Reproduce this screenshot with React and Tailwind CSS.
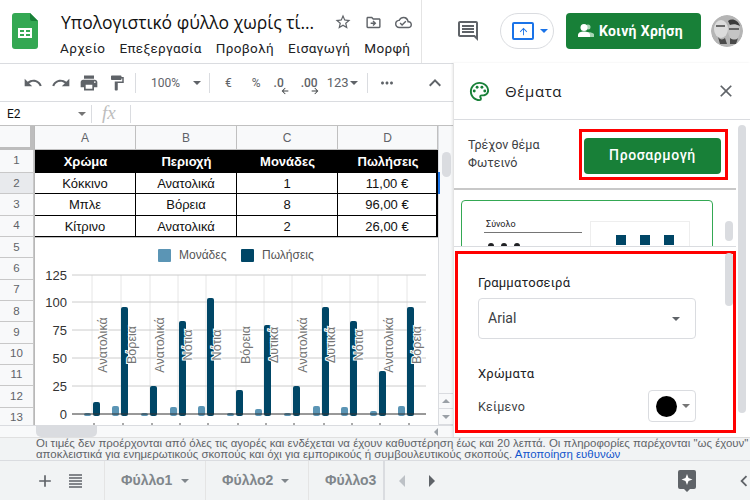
import React from 'react';
import {
  MdUndo, MdRedo, MdPrint, MdFormatPaint, MdMoreHoriz, MdKeyboardArrowUp, MdStarBorder,
  MdOutlineDriveFileMove, MdOutlineCloudDone, MdOutlineComment, MdOutlinePalette,
  MdClose, MdArrowUpward, MdAdd, MdArrowBack, MdArrowForward, MdChevronLeft,
} from 'react-icons/md';

const font = { roboto: 'font-["Roboto",sans-serif]' };

const rows = [
  ['Κόκκινο', 'Ανατολικά', '1', '11,00 €'],
  ['Μπλε', 'Βόρεια', '8', '96,00 €'],
  ['Κίτρινο', 'Ανατολικά', '2', '26,00 €'],
];

const bars = [
  [85, 413, 94, 402, 'Ανατολικά', 103],
  [113, 406, 122, 307, 'Βόρεια', 132],
  [142, 413, 151, 386, 'Ανατολικά', 160],
  [171, 407, 180, 321, 'Νότια', 188],
  [199, 406, 208, 298, 'Νότια', 217],
  [228, 413, 237, 390, 'Βόρεια', 246],
  [256, 409, 265, 325, 'Δυτικά', 274],
  [285, 413, 294, 386, 'Ανατολικά', 303],
  [314, 406, 323, 307, 'Δυτικά', 331],
  [342, 407, 351, 321, 'Νότια', 359],
  [371, 411, 380, 371, 'Ανατολικά', 389],
  [399, 406, 408, 307, 'Βόρεια', 417],
];

const ticks = [[125, 275], [100, 302], [75, 330], [50, 358], [25, 386], [0, 414]];
const vlines = [93, 122, 151, 179, 207, 237, 265, 293, 323, 351, 379, 408];

const Caret = ({ className = 'border-t-[#5f6368]' }) => (
  <span className={`inline-block w-0 h-0 border-x-[4px] border-x-transparent border-t-[4px] ${className}`} />
);

const Logo = () => (
  <svg width="26" height="36" viewBox="0 0 26 36">
    <path d="M3 0h15l8 8v25a3 3 0 0 1-3 3H3a3 3 0 0 1-3-3V3a3 3 0 0 1 3-3z" fill="#34a853" />
    <path d="M18 0l8 8h-6a2 2 0 0 1-2-2z" fill="#188038" />
    <path d="M6 15h14v10H6z" fill="#fff" />
    <path d="M8 17h4v2H8zM14 17h4v2h-4zM8 21h4v2H8zM14 21h4v2h-4z" fill="#34a853" />
  </svg>
);

const Avatar = () => (
  <svg width="32" height="32" viewBox="0 0 32 32" className="rounded-full">
    <circle cx="16" cy="16" r="16" fill="#b5b5b5" />
    <ellipse cx="10" cy="14" rx="7" ry="9" fill="#dcdcdc" />
    <ellipse cx="23" cy="16" rx="6" ry="9" fill="#c4c4c4" />
    <path d="M17 6c4-3 10-1 12 5-4-2-7-2-10-1z" fill="#3a3a3a" />
    <path d="M5 11h9M18 14h10" stroke="#444" strokeWidth="1.5" />
    <path d="M7 22c2 3 5 3 7 1l2 6H9zM19 23c3 2 6 2 8 0l-2 6h-6z" fill="#4a4a4a" />
  </svg>
);

const ShareIcon = () => (
  <svg width="16" height="14" viewBox="0 0 16 14" className="shrink-0">
    <circle cx="10" cy="3" r="2.5" fill="#a8d5b5" />
    <path d="M8 9c1-1 6-1 8 1v3H9z" fill="#a8d5b5" />
    <circle cx="6" cy="3.5" r="3.5" fill="#fff" />
    <path d="M0 13v-2c0-2.5 3-3.5 6-3.5s6 1 6 3.5v2z" fill="#fff" />
  </svg>
);

const Header = () => (
  <header className="relative h-16 shrink-0 flex items-start border-b border-[#dadce0] bg-white">
    <div className="pl-3 pt-[13px] w-[61px] shrink-0"><Logo /></div>
    <div className="pt-[8px] w-[361px] shrink-0 border-r border-[#e4e4e4] h-full">
      <div className="flex items-center h-[28px]">
        <span className="text-[17.5px] text-[#111] font-['Open_Sans',sans-serif] w-[274px] whitespace-nowrap">Υπολογιστικό φύλλο χωρίς τί...</span>
        <MdStarBorder className="text-[18px] text-[#5f6368] ml-[-1px]" />
        <MdOutlineDriveFileMove className="text-[17px] text-[#5f6368] ml-[13px]" />
        <MdOutlineCloudDone className="text-[17px] text-[#5f6368] ml-[13px]" />
      </div>
      <nav className={`flex gap-[14px] -ml-px text-[13.5px] text-[#202124] tracking-[0.35px] mt-[2px] whitespace-nowrap overflow-hidden ${font.roboto}`}>
        <span>Αρχείο</span><span>Επεξεργασία</span><span>Προβολή</span><span>Εισαγωγή</span><span>Μορφή</span>
      </nav>
    </div>
    <div className="flex items-center h-[36px] mt-[13px]">
      <MdOutlineComment className="text-[24px] text-[#5f6368] ml-[34px]" />
      <div className="ml-[20px] w-[54px] h-[36px] rounded-full border border-[#dadce0] flex items-center pl-[11px] gap-[3px]">
        <span className="w-[22px] h-[18px] border-2 border-[#1a73e8] rounded-[2px] flex items-center justify-center">
          <MdArrowUpward className="text-[11px] text-[#1a73e8]" />
        </span>
        <Caret className="border-t-[#1a73e8] ml-[3px]" />
      </div>
      <button className={`ml-[12px] w-[135px] h-[36px] rounded-[4px] bg-[#188038] text-white text-[14px] font-bold tracking-[0.35px] flex items-center pl-[12px] gap-[5px] whitespace-nowrap ${font.roboto}`}>
        <ShareIcon />Κοινή Χρήση
      </button>
      <div className="ml-[10px]"><Avatar /></div>
    </div>
  </header>
);

const Divider = () => <span className="block w-px h-[20px] bg-[#dadce0]" />;

const Toolbar = () => (
  <div className={`h-[38px] flex items-center text-[#5f6368] border-b border-[#dadce0] ${font.roboto}`}>
    <MdUndo className="text-[20px] ml-[23px]" />
    <MdRedo className="text-[20px] ml-[8px]" />
    <MdPrint className="text-[20px] ml-[8px]" />
    <MdFormatPaint className="text-[18px] ml-[9px]" />
    <span className="ml-[9px]"><Divider /></span>
    <span className="text-[12px] ml-[15px] w-[39px]">100%</span>
    <Caret className="border-t-[#5f6368] ml-[3px]" />
    <span className="ml-[8px]"><Divider /></span>
    <span className="text-[12px] ml-[15px]">€</span>
    <span className="text-[12px] ml-[20px]">%</span>
    <span className="text-[12px] font-medium ml-[13px] relative">.0<MdArrowBack className="absolute top-[12px] left-[6px] text-[10px] text-[#3c4043]" /></span>
    <span className="text-[12px] font-medium ml-[17px] relative">.00<MdArrowForward className="absolute top-[12px] left-[9px] text-[10px] text-[#3c4043]" /></span>
    <span className="text-[13px] ml-[9px]">123</span>
    <Caret className="border-t-[#5f6368] ml-[1px]" />
    <span className="ml-[9px]"><Divider /></span>
    <MdMoreHoriz className="text-[18px] ml-[10px]" />
    <MdKeyboardArrowUp className="text-[24px] ml-[27px]" />
  </div>
);

const FormulaBar = () => (
  <div className="h-[24px] flex items-center border-b border-[#c0c0c0] shrink-0">
    <span className={`text-[12px] text-[#111] pl-[7px] w-[78px] ${font.roboto}`}>E2</span>
    <Caret className="border-t-[#757575]" />
    <span className="ml-[5px] w-px h-[18px] bg-[#dadce0]" />
    <span className="ml-[10px] w-[28px] text-[19px] italic text-[#bdbdbd] font-['Liberation_Serif',serif]">fx</span>
    <span className="w-px h-[18px] bg-[#dadce0]" />
  </div>
);

const colHead = 'flex items-center justify-center border-r border-[#c0c0c0] text-[12px] text-[#5f6368] font-["Liberation_Sans",sans-serif]';

const Chart = () => (
  <div className="h-[188px] bg-white border-t border-[#c0c0c0] overflow-hidden">
    <svg width="403" height="188" viewBox="36 238 403 188" className="block font-['Liberation_Sans',sans-serif]">
      <rect x="159" y="249" width="13" height="13" rx="1" fill="#5b95b5" />
      <text x="180" y="259" fontSize="12" fill="#555">Μονάδες</text>
      <rect x="242" y="249" width="13" height="13" rx="1" fill="#004666" />
      <text x="263" y="259" fontSize="12" fill="#555">Πωλήσεις</text>
      {vlines.map((x) => <line key={x} x1={x} x2={x} y1="275" y2="414" stroke="#e6e6e6" />)}
      {ticks.slice(0, 5).map(([v, y]) => <line key={v} x1="73" x2="427" y1={y} y2={y} stroke="#ccc" />)}
      {ticks.map(([v, y]) => <text key={v} x="68" y={y + 5} fontSize="13" textAnchor="end" fill="#333">{v}</text>)}
      {bars.map(([lx, ly, dx, dy]) => (
        <g key={lx}>
          <rect x={lx} y={ly} width="7" height={414 - ly + 2} rx="2" fill="#5b95b5" />
          <rect x={dx} y={dy} width="7" height={414 - dy + 2} rx="2" fill="#004666" />
        </g>
      ))}
      <line x1="73" x2="427" y1="414" y2="414" stroke="#333" />
      {vlines.map((x) => <line key={x} x1={x + 2} x2={x + 2} y1="423" y2="426" stroke="#555" />)}
      {bars.map(([lx, , , , label, cx]) => (
        <text
          key={lx}
          transform={`translate(${cx + 5} 345) rotate(-90)`}
          fontSize="12.5"
          textAnchor="middle"
          fill="#757575"
          stroke="#fff"
          strokeWidth="2"
          paintOrder="stroke"
        >
          {label}
        </text>
      ))}
    </svg>
  </div>
);

const Grid = () => (
  <div className="flex-1 flex min-h-0 overflow-hidden">
    <div className="w-[35px] shrink-0 border-r border-[#b8b8b8]">
      <div className="h-[24px] bg-[#f8f9fa] border-b-[3px] border-r-[4px] border-[#bdbdbd]" />
      {Array.from({ length: 13 }, (_, i) => (
        <div
          key={i}
          className={`${i === 0 ? 'h-[23px]' : 'h-[21.33px]'} flex items-center justify-center border-b border-r border-[#c8c8c8] text-[11.5px] text-[#5f6368] font-['Liberation_Sans',sans-serif] ${i === 1 ? 'bg-[#e8eaed]' : 'bg-[#f8f9fa]'}`}
        >
          {i + 1}
        </div>
      ))}
    </div>
    <div className="w-[403px] shrink-0">
      <div className="h-[24px] grid grid-cols-[101px_101px_101px_100px] bg-[#f8f9fa] border-b border-[#c0c0c0]">
        {['A', 'B', 'C', 'D'].map((c) => <div key={c} className={colHead}>{c}</div>)}
      </div>
      <div className="h-[23px] grid grid-cols-[101px_101px_101px_100px] bg-black text-white font-bold text-[13px] font-['Liberation_Sans',sans-serif] items-center text-center">
        {['Χρώμα', 'Περιοχή', 'Μονάδες', 'Πωλήσεις'].map((c) => <div key={c}>{c}</div>)}
      </div>
      {rows.map((r) => (
        <div key={r[0]} className="h-[21.33px] grid grid-cols-[101px_101px_101px_100px] border-b border-black text-[13px] text-[#111] font-['Liberation_Sans',sans-serif] text-center">
          {r.map((c, i) => <div key={c} className={`border-black leading-[21px] ${i === 3 ? 'border-r-2' : 'border-r'}`}>{c}</div>)}
        </div>
      ))}
      <Chart />
    </div>
    <div className="relative flex-1 bg-[#f8f9fa] border-l border-[#dadce0]">
      <span className="absolute -left-px top-[46px] w-[2px] h-[22px] bg-[#1a73e8]" />
      <span className="absolute left-[3px] top-[26px] w-[9px] h-[25px] rounded-[5px] bg-[#dadce0]" />
      <span className="absolute left-0 right-0 top-[267px] h-[16px] border-y border-[#dadce0] flex items-center justify-center"><span className="w-0 h-0 border-x-[4px] border-x-transparent border-b-[4px] border-b-[#9aa0a6]" /></span>
      <span className="absolute left-0 right-0 top-[283px] h-[16px] border-b border-[#dadce0] flex items-center justify-center"><Caret className="border-t-[#9aa0a6]" /></span>
    </div>
  </div>
);

const HScroll = () => (
  <div className="h-[12px] shrink-0 flex items-center bg-[#f8f9fa] border-t border-[#dadce0]">
    <span className="ml-[36px] w-[61px] h-[11px] rounded-b-[5px] bg-[#dadce0] self-start" />
    <span className="ml-[337px] w-0 h-0 border-y-[4px] border-y-transparent border-r-[4px] border-r-[#9aa0a6]" />
  </div>
);

const Sidebar = () => (
  <aside className={`relative w-[297px] shrink-0 bg-white border-l border-[#e4e4e4] shadow-[-1px_0_2px_rgba(0,0,0,0.08)] flex flex-col -mt-px ${font.roboto}`}>
    <div className="h-[57px] shrink-0 flex items-center border-b border-[#dadce0] pl-[14px]">
      <MdOutlinePalette className="text-[23px] text-[#188038]" />
      <span className="ml-[14px] text-[15px] text-[#202124] tracking-[0.6px] font-medium font-['Open_Sans',sans-serif]">Θέματα</span>
      <MdClose className="text-[20px] text-[#5f6368] ml-[154px]" />
    </div>
    <div className="h-[70px] shrink-0 flex items-center border-b-2 border-[#c8c8c8] pl-[14px] mr-[14px]">
      <div className="text-[12.5px] leading-[18px] text-[#3c4043] w-[111px]">
        <div>Τρέχον θέμα</div>
        <div>Φωτεινό</div>
      </div>
      <div className="border-[3px] border-[#ff0000] pl-[2px] pt-[6px] w-[149px] h-[51px]">
        <button className="w-[137px] h-[36px] rounded-[4px] bg-[#188038] text-white text-[14px] font-medium tracking-[0.6px]">Προσαρμογή</button>
      </div>
    </div>
    <div className="h-[57px] shrink-0 pl-[7px] pt-[10px] overflow-hidden border-b border-[#dadce0] mr-[14px]">
      <div className="w-[252px] h-[80px] border border-[#34a853] rounded-t-[4px] flex">
        <div className="ml-[22px] mt-[17px] w-[98px]">
          <div className="h-[15px] border-b border-[#757575] text-[9px] leading-[13px] text-[#202124] pl-[2px]">Σύνολο</div>
          <div className="flex gap-[7px] pl-[4px] mt-[10px]">
            <span className="w-[6px] h-[6px] rounded-full bg-[#202124]" />
            <span className="w-[6px] h-[6px] rounded-full bg-[#202124]" />
            <span className="w-[6px] h-[6px] rounded-full bg-[#202124]" />
          </div>
        </div>
        <div className="ml-[8px] mt-[20px] w-[100px] border border-[#eee] flex gap-[14px] pl-[25px] pt-[13px]">
          <span className="w-[10px] h-[10px] bg-[#004666]" />
          <span className="w-[10px] h-[10px] bg-[#004666]" />
          <span className="w-[10px] h-[10px] bg-[#004666]" />
        </div>
      </div>
    </div>
    <div className="ml-[1px] mt-[4px] w-[281px] h-[182px] border-[3px] border-[#ff0000] pl-[20px] pt-[20px] pr-[37px] overflow-hidden">
      <div className="text-[13px] text-[#202124] tracking-[0.2px] leading-[18px]">Γραμματοσειρά</div>
      <div className="mt-[6px] h-[41px] border border-[#dadce0] rounded-[4px] flex items-center justify-between pl-[9px] pr-[15px] text-[14px] text-[#3c4043]">
        Arial<Caret />
      </div>
      <div className="mt-[26px] text-[13px] text-[#202124] tracking-[0.2px] leading-[18px]">Χρώματα</div>
      <div className="mt-[7px] flex items-center justify-between">
        <span className="mt-[2px] text-[12.5px] text-[#3c4043] tracking-[0.2px]">Κείμενο</span>
        <div className="w-[48px] h-[32px] border border-[#dadce0] rounded-[4px] flex items-center pl-[7px] gap-[5px]">
          <span className="w-[21px] h-[21px] rounded-full bg-black" />
          <Caret className="border-t-[#757575]" />
        </div>
      </div>
    </div>
    <span className="absolute left-[284px] top-[62px] w-[8px] h-[288px] rounded-[4px] bg-[#dadce0]" />
    <span className="absolute left-[271px] top-[158px] w-[8px] h-[20px] rounded-[4px] bg-[#dadce0]" />
    <span className="absolute left-[271px] top-[190px] w-[8px] h-[53px] rounded-[4px] bg-[#dadce0]" />
  </aside>
);

const Notice = () => (
  <div className="h-[23px] shrink-0 bg-[#f1f3f4] border-t border-[#e0e0e0] pl-[36px] text-[11.45px] leading-[11px] text-[#5f6368] font-['Liberation_Sans',sans-serif] whitespace-nowrap overflow-hidden">
    <div>Οι τιμές δεν προέρχονται από όλες τις αγορές και ενδέχεται να έχουν καθυστέρηση έως και 20 λεπτά. Οι πληροφορίες παρέχονται "ως έχουν"</div>
    <div>αποκλειστικά για ενημερωτικούς σκοπούς και όχι για εμπορικούς ή συμβουλευτικούς σκοπούς. <span className="text-[#1155cc]">Αποποίηση ευθυνών</span></div>
  </div>
);

const Tabs = () => (
  <div className="flex-1 flex bg-[#f1f3f4] border-t border-[#dadce0] font-['Liberation_Sans',sans-serif] text-[#80868b] font-bold text-[14px]">
    <div className="w-[105px] shrink-0 flex items-center text-[#5f6368] border-r border-[#e4e4e4]">
      <MdAdd className="text-[20px] ml-[35px]" />
      <svg width="13" height="14" viewBox="0 0 13 14" className="ml-[14px]">
        <path d="M0 1h13M0 4h13M0 7h13M0 10h13M0 13h13" stroke="#5f6368" strokeWidth="1.6" />
      </svg>
    </div>
    <div className="w-[101px] shrink-0 flex items-center pl-[16px] gap-[9px] border-r border-[#e4e4e4]">Φύλλο1<Caret className="border-t-[#80868b]" /></div>
    <div className="w-[103px] shrink-0 flex items-center pl-[16px] gap-[8px] border-r border-[#e4e4e4]">Φύλλο2<Caret className="border-t-[#80868b]" /></div>
    <div className="w-[76px] shrink-0 flex items-center pl-[16px] overflow-hidden whitespace-nowrap border-r-2 border-[#dadce0]">Φύλλο3</div>
    <div className="flex-1 flex items-center">
      <span className="ml-[14px] w-0 h-0 border-y-[6px] border-y-transparent border-r-[6px] border-r-[#bdc1c6]" />
      <span className="ml-[24px] w-0 h-0 border-y-[6px] border-y-transparent border-l-[6px] border-l-[#5f6368]" />
      <svg width="18" height="22" viewBox="0 0 18 22" className="ml-[243px]">
        <path d="M2 0h14a2 2 0 0 1 2 2v15a2 2 0 0 1-2 2h-4l-3 3-3-3H2a2 2 0 0 1-2-2V2a2 2 0 0 1 2-2z" fill="#5f6368" />
        <path d="M9 4l1.5 4 4 1.5-4 1.5-1.5 4-1.5-4-4-1.5 4-1.5z" fill="#fff" />
      </svg>
      <MdChevronLeft className="text-[22px] text-[#5f6368] ml-[37px] shrink-0" />
    </div>
  </div>
);

export default function App() {
  return (
    <div className="w-[750px] h-[500px] flex flex-col overflow-hidden bg-white">
      <Header />
      <div className="h-[373px] shrink-0 flex">
        <div className="w-[453px] shrink-0 flex flex-col">
          <Toolbar />
          <FormulaBar />
          <Grid />
          <HScroll />
        </div>
        <Sidebar />
      </div>
      <Notice />
      <Tabs />
    </div>
  );
}
